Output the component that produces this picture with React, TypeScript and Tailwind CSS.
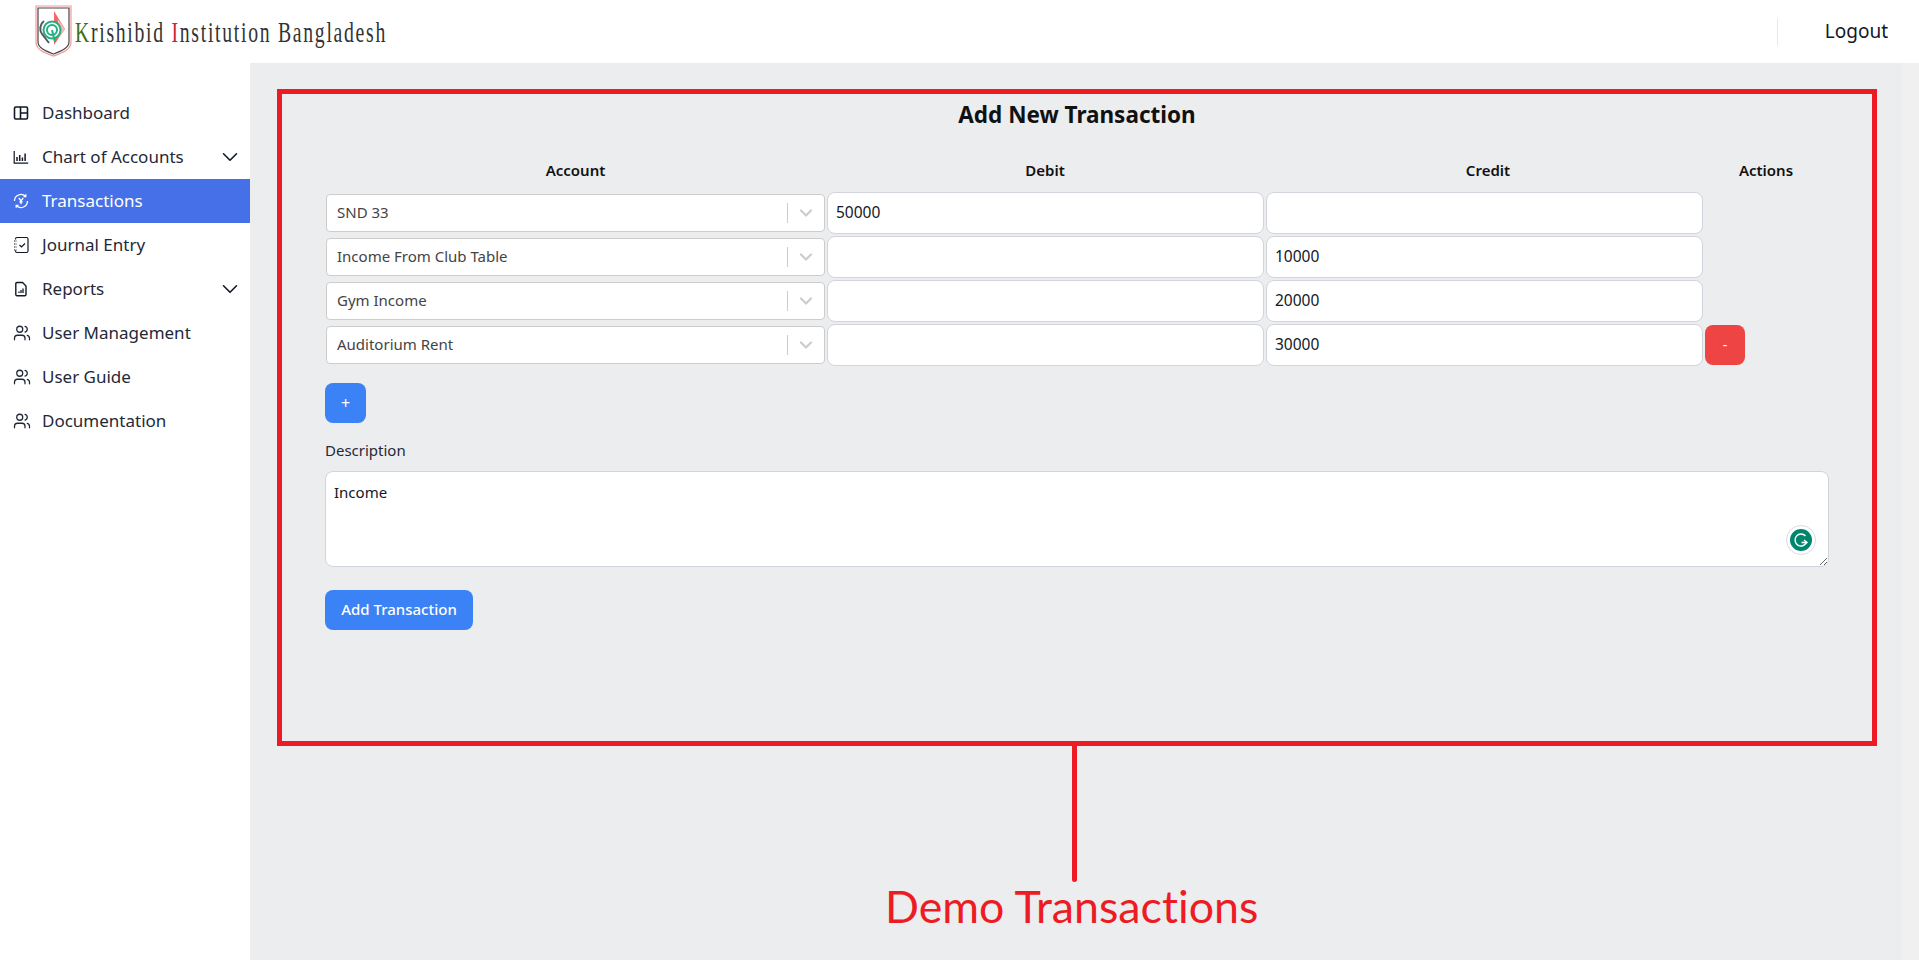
import React from "react";
import { ChevronDown, Users } from "lucide-react";

const f = "font-['Noto_Sans',sans-serif]";

const DashIcon = () => (
  <svg width="16" height="16" viewBox="0 0 16 16" fill="none" stroke="#111827" strokeWidth="1.6">
    <rect x="1.5" y="2" width="13" height="12" rx="1.2" />
    <path d="M7.5 2v12M7.5 8h7" />
  </svg>
);
const ChartIcon = () => (
  <svg width="16" height="16" viewBox="0 0 16 16" fill="none" stroke="#111827" strokeWidth="1.2">
    <path d="M1.2 2v12.2h14" />
    <path d="M4 12V8M6.7 12V6M9.4 12V8.5M12.1 12V4.5" strokeWidth="1.5" />
  </svg>
);
const TxIcon = () => (
  <svg width="16" height="16" viewBox="0 0 16 16" fill="none" stroke="#fff" strokeWidth="1.3">
    <path d="M1.500 8a6.500 6.500 0 0 1 11-4.700M14.500 8a6.500 6.500 0 0 1-11 4.700" />
    <path d="M12.800 1.300v2.300h-2.300M3.200 14.700v-2.300h2.300" />
    <path d="M5.800 5l2.200 3 2.200-3M8 8v3.200M6.300 8.800h3.400" />
  </svg>
);
const JournalIcon = () => (
  <svg width="16" height="18" viewBox="0 0 16 18" fill="none" stroke="#111827" strokeWidth="1.2">
    <path d="M2.500 3.500V3A1.500 1.500 0 0 1 4 1.500h9.500A1.500 1.500 0 0 1 15 3v12a1.500 1.500 0 0 1-1.500 1.500H4A1.500 1.500 0 0 1 2.500 15v-.5" />
    <path d="M1 5h3M1 8h3M1 11h3M1 14h3" strokeDasharray="1.5 1" />
    <path d="M6.500 9l2 2 3.500-3.500" />
  </svg>
);
const ReportIcon = () => (
  <svg width="16" height="16" viewBox="0 0 16 16" fill="none" stroke="#111827" strokeWidth="1.4">
    <path d="M4 1.500h5.500L13 5v8.500a1.200 1.200 0 0 1-1.200 1.200H4a1.200 1.200 0 0 1-1.200-1.200V2.700A1.200 1.200 0 0 1 4 1.500z" />
    <path d="M6 12v-1.500M8 12V9M10 12V7.500" strokeWidth="1.300" />
  </svg>
);

const Row = ({ icon, label, active, chev }: { icon: React.ReactNode; label: string; active?: boolean; chev?: boolean }) => (
  <div className={`h-11 flex items-center pl-[13px] pr-[7px] ${active ? "bg-[#4570e8] text-white" : "text-[#1f2937]"}`}>
    <span className="w-[29px] flex items-center shrink-0">{icon}</span>
    <span className="text-[17px] flex-1">{label}</span>
    {chev && <ChevronDown size={26} strokeWidth={1.5} className="text-[#111827]" />}
  </div>
);

const Sel = ({ v }: { v: string }) => (
  <div className="h-[38px] self-center bg-white border border-[#cccccc] rounded flex items-center pl-[10px] text-[#444444] text-[15px]">
    <span className="flex-1 pb-[2px]">{v}</span>
    <span className="w-px h-5 bg-[#cccccc]" />
    <span className="w-[36px] flex justify-center">
      <ChevronDown size={20} strokeWidth={2.6} className="text-[#cccccc]" />
    </span>
  </div>
);

const Inp = ({ v }: { v: string }) => (
  <input
    readOnly
    value={v}
    className="h-[42px] w-full bg-white border border-[#d1d5db] rounded-lg px-2 pb-[2px] text-[15.500px] text-[#111827] outline-none"
  />
);

const rows = [
  { a: "SND 33", d: "50000", c: "" },
  { a: "Income From Club Table", d: "", c: "10000" },
  { a: "Gym Income", d: "", c: "20000" },
  { a: "Auditorium Rent", d: "", c: "30000" },
];

export default function App() {
  return (
    <div className={`h-screen w-full overflow-hidden flex flex-col bg-white ${f}`}>
      <header className="h-[63px] shrink-0 bg-white flex items-center pl-[35px]">
        <svg width="37" height="52" viewBox="0 0 37 52" className="mt-[-2px]">
          <path d="M1 1h35v36c0 8-9 11-17.500 14C10 48 1 45 1 37z" fill="#fff" stroke="#f29a9a" strokeWidth="1.2" />
          <path d="M3 3h31v34c0 6-8 9-15.500 12C11 46 3 43 3 37z" fill="#fff" stroke="#444" strokeWidth="1.2" />
          <path d="M19 6l11 18-11 16z" fill="#ef6a6a" />
          <path d="M23 14l7 10-7 9z" fill="#f6b5b5" />
          <circle cx="17" cy="25" r="8.500" fill="#fff" stroke="#21b07f" strokeWidth="2" />
          <circle cx="17" cy="25" r="5" fill="none" stroke="#21b07f" strokeWidth="2" />
          <path d="M17 25l3 12" stroke="#21b07f" strokeWidth="2" />
          <path d="M9 16c-4 3-5 9-2 13l7 9" fill="none" stroke="#555" strokeWidth="2" />
        </svg>
        <span className="ml-[3px] font-['Liberation_Serif',serif] text-[30px] leading-none text-[#333333] tracking-[2.600px] whitespace-nowrap origin-left scale-x-[0.657] mt-[1px]">
          <span className="text-[#3f6f12]">K</span>rishibid <span className="text-[#c8272d]">I</span>nstitution Bangladesh
        </span>
        <div className="ml-auto flex items-center">
          <span className="w-px h-7 bg-[#e5e7eb]" />
          <span className="ml-[47px] mr-[31px] text-[19px] text-[#111827]">Logout</span>
        </div>
      </header>
      <div className="flex-1 flex min-h-0">
        <aside className="w-[250px] shrink-0 bg-white pt-7">
          <Row icon={<DashIcon />} label="Dashboard" />
          <Row icon={<ChartIcon />} label="Chart of Accounts" chev />
          <Row icon={<TxIcon />} label="Transactions" active />
          <Row icon={<JournalIcon />} label="Journal Entry" />
          <Row icon={<ReportIcon />} label="Reports" chev />
          <Row icon={<Users size={18} strokeWidth={1.7} />} label="User Management" />
          <Row icon={<Users size={18} strokeWidth={1.7} />} label="User Guide" />
          <Row icon={<Users size={18} strokeWidth={1.7} />} label="Documentation" />
        </aside>
        <main className="flex-1 relative bg-[#ecedef] pl-[75px] pr-[73px] pt-[36px] text-[#111827]">
          <h1 className="text-center text-[22.500px] leading-8 font-bold text-[#111111]">Add New Transaction</h1>
          <div className="grid grid-cols-[501px_438px_448px_108px] text-center font-semibold text-[15px] leading-6 mt-[27px] mb-[10px] text-[#111111]">
            <div>Account</div>
            <div>Debit</div>
            <div>Credit</div>
            <div>Actions</div>
          </div>
          <div className="grid grid-cols-[499px_437px_437px_40px] gap-x-[2px] gap-y-[2px] pl-px">
            {rows.map((r, i) => (
              <React.Fragment key={r.a}>
                <Sel v={r.a} />
                <Inp v={r.d} />
                <Inp v={r.c} />
                {i === 3 ? (
                  <button className="h-10 self-center bg-[#ef4444] text-white rounded-lg text-sm">-</button>
                ) : (
                  <span />
                )}
              </React.Fragment>
            ))}
          </div>
          <button className="mt-[17px] block w-[41px] h-10 bg-[#3b82f6] text-white rounded-lg text-base">+</button>
          <div className="mt-[15px] text-[15px] leading-6 text-[#1f2937]">Description</div>
          <div className="relative mt-[9px]">
            <textarea
              readOnly
              defaultValue="Income"
              className="block w-full h-[96px] bg-white border border-[#d1d5db] rounded-lg px-2 py-2 text-[15px] leading-6 text-[#111827] outline-none resize-y"
            />
            <span className="absolute right-[13px] bottom-[12px] w-[30px] h-[30px] rounded-full bg-white border border-[#d9dbe0] flex items-center justify-center">
              <svg width="22" height="22" viewBox="0 0 22 22">
                <circle cx="11" cy="11" r="11" fill="#00866f" />
                <path d="M15.500 7a6 6 0 1 0 1 6.500H11.500M14 11l3 2.500-3 2.500" fill="none" stroke="#fff" strokeWidth="1.4" />
              </svg>
            </span>
          </div>
          <button className="mt-[23px] block w-[148px] h-10 pb-px bg-[#3b82f6] text-white rounded-lg text-[15px] font-medium">Add Transaction</button>

          <div className="absolute left-[27px] top-[26px] w-[1600px] h-[657px] border-[5px] border-[#ed1c24] pointer-events-none" />
          <div className="absolute left-[822px] top-[682px] w-[5px] h-[137px] bg-[#ed1c24] rounded-b-sm" />
          <div className="absolute left-[635px] top-[811px] font-['Lato',sans-serif] [font-variant-ligatures:none] text-[44.700px] leading-[64px] text-[#ed1c24] whitespace-nowrap">Demo Transactions</div>
        </main>
        <div className="w-[17px] shrink-0 bg-[#f0f0f1]" />
      </div>
    </div>
  );
}
